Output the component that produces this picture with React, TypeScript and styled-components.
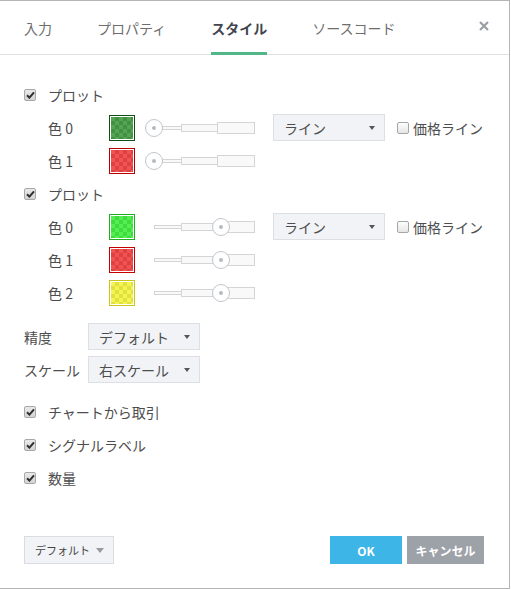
import React from "react";
import styled, { createGlobalStyle } from "styled-components";

const GlobalStyle = createGlobalStyle`
  html, body { margin: 0; padding: 0; background: #fff; }
  body { font-family: "Noto Sans CJK JP", "Noto Sans", sans-serif; color: #4d4d4d; }
  * { box-sizing: border-box; }
`;

const Dialog = styled.div`
  width: 510px;
  height: 589px;
  border-top: 1px solid #b5b5b5;
  border-right: 1px solid #b5b5b5;
  border-bottom: 1px solid #b5b5b5;
  background: #fff;
  display: flex;
  flex-direction: column;
`;

const Header = styled.div`
  height: 54px;
  border-bottom: 1px solid #e0e0e0;
  display: flex;
  align-items: stretch;
  gap: 45px;
  padding-left: 24px;
`;

const Tab = styled.div<{ $active?: boolean }>`
  display: flex;
  align-items: center;
  height: calc(100% + 1px);
  margin-bottom: -1px;
  padding-top: 3px;
  border-bottom: 3px solid ${(p) => (p.$active ? "#52b788" : "transparent")};
  font-size: 14px;
  line-height: 20px;
  font-weight: ${(p) => (p.$active ? 700 : 400)};
  color: ${(p) => (p.$active ? "#41464e" : "#6e6e6e")};
`;

const Close = styled.div`
  margin-left: auto;
  margin-right: 20px;
  display: flex;
  align-items: center;
  padding-bottom: 4px;
`;

const Body = styled.div`
  display: flex;
  flex-direction: column;
  padding: 23px 0 0 24px;
`;

const Row = styled.div<{ $indent?: number; $mt?: number }>`
  height: 33px;
  display: flex;
  align-items: center;
  padding-left: ${(p) => p.$indent ?? 0}px;
  margin-top: ${(p) => p.$mt ?? 0}px;
  font-size: 14px;
  line-height: 20px;
`;

const Label = styled.span<{ $w?: number }>`
  width: ${(p) => (p.$w ? `${p.$w}px` : "auto")};
  flex: none;
  white-space: nowrap;
  color: #4d4d4d;
`;

const Box = styled.span<{ $checked?: boolean; $ml?: number }>`
  width: 12px;
  height: 12px;
  flex: none;
  margin-left: ${(p) => p.$ml ?? 0}px;
  margin-right: ${(p) => (p.$checked ? 12 : 4)}px;
  border: 1px solid ${(p) => (p.$checked ? "#a8a8a8" : "#a6a6a6")};
  border-radius: 2px;
  background: ${(p) =>
    p.$checked
      ? "linear-gradient(#e9e9e9, #d4d4d4)"
      : "linear-gradient(#fdfdfd, #e6e6e6)"};
  display: flex;
  align-items: center;
  justify-content: center;
`;

const Swatch = styled.span<{ $border: string; $fill: string }>`
  width: 26px;
  height: 26px;
  flex: none;
  border: 1px solid ${(p) => p.$border};
  padding: 1px;
  background: #fff;
  display: flex;
  &::after {
    content: "";
    flex: 1;
    background-color: ${(p) => p.$fill};
    background-image: conic-gradient(
      rgba(0, 0, 0, 0.08) 25%,
      rgba(255, 255, 255, 0.07) 0 50%,
      rgba(0, 0, 0, 0.08) 0 75%,
      rgba(255, 255, 255, 0.07) 0
    );
    background-size: 8px 8px;
  }
`;

const Slider = styled.div`
  position: relative;
  width: 119px;
  height: 20px;
  margin-left: 10px;
  padding: 0 9px;
  display: flex;
  align-items: center;
  flex: none;
`;

const Seg = styled.span<{ $w: number; $h: number }>`
  width: ${(p) => p.$w}px;
  height: ${(p) => p.$h}px;
  border: 1px solid #d5d5d5;
  background: #f9f9f9;
  flex: none;
  & + & {
    margin-left: -1px;
  }
`;

const Thumb = styled.span`
  position: absolute;
  top: 1px;
  width: 18px;
  height: 18px;
  margin-left: -9px;
  border-radius: 50%;
  border: 1px solid #c2c6cd;
  background: #fff;
  display: flex;
  align-items: center;
  justify-content: center;
  &::after {
    content: "";
    width: 4px;
    height: 4px;
    border-radius: 50%;
    background: #b5bac2;
  }
`;

const Select = styled.div<{ $ml?: number }>`
  width: 112px;
  height: 27px;
  flex: none;
  margin-left: ${(p) => p.$ml ?? 0}px;
  border: 1px solid #dcdfe4;
  background: #f1f3f6;
  display: flex;
  align-items: center;
  padding: 0 9px 0 10px;
  font-size: 14px;
  color: #4d4d4d;
  white-space: nowrap;
`;

const Caret = styled.span<{ $color?: string; $size?: number }>`
  margin-left: auto;
  flex: none;
  width: 0;
  height: 0;
  border-left: ${(p) => p.$size ?? 3.5}px solid transparent;
  border-right: ${(p) => p.$size ?? 3.5}px solid transparent;
  border-top: ${(p) => (p.$size ?? 3.5) + 0.5}px solid ${(p) => p.$color ?? "#555"};
`;

const Footer = styled.div`
  margin-top: auto;
  display: flex;
  align-items: center;
  padding: 0 25px 24px 24px;
`;

const DefaultBtn = styled.div`
  width: 90px;
  height: 28px;
  border: 1px solid #d9dce1;
  background: #f1f3f6;
  display: flex;
  align-items: center;
  padding: 0 9px 0 10px;
  font-size: 11px;
  color: #444;
  white-space: nowrap;
`;

const Btn = styled.div<{ $bg: string; $w: number; $ml?: number }>`
  width: ${(p) => p.$w}px;
  height: 28px;
  margin-left: ${(p) => p.$ml ?? 0}px;
  background: ${(p) => p.$bg};
  color: #fff;
  font-size: 12px;
  font-weight: 700;
  display: flex;
  align-items: center;
  justify-content: center;
`;

const Spacer = styled.div`
  flex: 1;
`;

const Check = () => (
  <svg width="9" height="8" viewBox="0 0 9 8">
    <path d="M1 4.3 L3.4 6.6 L8 1.3" fill="none" stroke="#2f2f2f" strokeWidth="2" />
  </svg>
);

const Checkbox = ({ checked, ml }: { checked?: boolean; ml?: number }) => (
  <Box $checked={checked} $ml={ml}>
    {checked && <Check />}
  </Box>
);

const Track = ({ value }: { value: number }) => (
  <Slider>
    <Seg $w={28} $h={4} />
    <Seg $w={37} $h={8} />
    <Seg $w={38} $h={12} />
    <Thumb style={{ left: `${9 + value * 101}px` }} />
  </Slider>
);

type C = { label: string; border: string; fill: string };

const ColorRow = ({ c, value, extra }: { c: C; value: number; extra?: boolean }) => (
  <Row $indent={24}>
    <Label $w={61}>{c.label}</Label>
    <Swatch $border={c.border} $fill={c.fill} />
    <Track value={value} />
    {extra && (
      <>
        <Select $ml={9}>
          ライン
          <Caret />
        </Select>
        <Checkbox ml={12} />
        <Label>価格ライン</Label>
      </>
    )}
  </Row>
);

export default function App() {
  return (
    <>
      <GlobalStyle />
      <Dialog>
        <Header>
          <Tab>入力</Tab>
          <Tab>プロパティ</Tab>
          <Tab $active>スタイル</Tab>
          <Tab>ソースコード</Tab>
          <Close>
            <svg width="10" height="10" viewBox="0 0 10 10">
              <path d="M1 1 L9 9 M9 1 L1 9" stroke="#9a9ea5" strokeWidth="2.2" />
            </svg>
          </Close>
        </Header>
        <Body>
          <Row>
            <Checkbox checked />
            <Label>プロット</Label>
          </Row>
          <ColorRow c={{ label: "色 0", border: "#124f12", fill: "#489c48" }} value={0} extra />
          <ColorRow c={{ label: "色 1", border: "#b80000", fill: "#f04646" }} value={0} />
          <Row>
            <Checkbox checked />
            <Label>プロット</Label>
          </Row>
          <ColorRow c={{ label: "色 0", border: "#1fae1f", fill: "#44ee44" }} value={0.66} extra />
          <ColorRow c={{ label: "色 1", border: "#c40000", fill: "#f04646" }} value={0.66} />
          <ColorRow c={{ label: "色 2", border: "#c9c41c", fill: "#f3f343" }} value={0.66} />
          <Row $mt={11}>
            <Label $w={64}>精度</Label>
            <Select>
              デフォルト
              <Caret />
            </Select>
          </Row>
          <Row>
            <Label $w={64}>スケール</Label>
            <Select>
              右スケール
              <Caret />
            </Select>
          </Row>
          <Row $mt={9}>
            <Checkbox checked />
            <Label>チャートから取引</Label>
          </Row>
          <Row>
            <Checkbox checked />
            <Label>シグナルラベル</Label>
          </Row>
          <Row>
            <Checkbox checked />
            <Label>数量</Label>
          </Row>
        </Body>
        <Footer>
          <DefaultBtn>
            デフォルト
            <Caret $color="#9a9a9a" $size={4.5} />
          </DefaultBtn>
          <Spacer />
          <Btn $bg="#3db5e6" $w={72}>OK</Btn>
          <Btn $bg="#9da1a8" $w={77} $ml={5}>キャンセル</Btn>
        </Footer>
      </Dialog>
    </>
  );
}
